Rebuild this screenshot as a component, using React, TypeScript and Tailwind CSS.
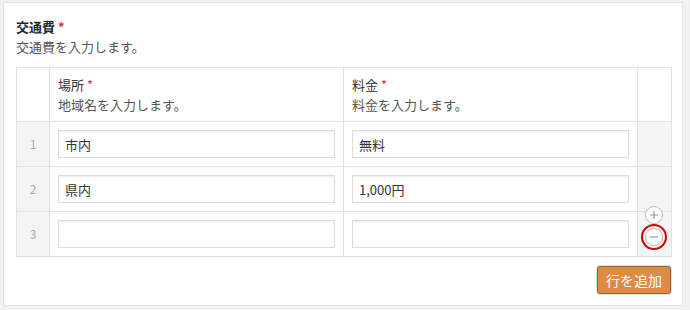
import React from 'react';

const rows = [
  { place: '市内', price: '無料' },
  { place: '県内', price: '1,000円' },
  { place: '', price: '' },
];

const font = { fontFamily: '"Noto Sans CJK JP", "Open Sans", sans-serif' };

function TextInput({ value }: { value: string }) {
  return (
    <input
      className="block h-[28px] w-full border border-[#dddddd] bg-white px-[6px] text-[13px] text-[#333] shadow-[inset_0_1px_2px_rgba(0,0,0,0.07)] outline-none"
      defaultValue={value}
    />
  );
}

export default function App() {
  return (
    <div className="h-[310px] w-[690px] bg-[#f1f1f1] pl-[3px] pt-[2px]" style={font}>
      <div className="h-[304px] w-[680px] border border-[#e5e5e5] bg-white pl-[12px] pr-[11px] pt-[14px]">
        <div className="text-[13px] font-bold leading-[20px] text-[#23282d]">
          交通費 <span className="text-[#dc3232]">*</span>
        </div>
        <div className="text-[13px] leading-[20px] text-[#555]">交通費を入力します。</div>

        <table className="mt-[10px] w-[655px] table-fixed border-collapse border border-[#e1e1e1] text-[13px]">
          <colgroup>
            <col className="w-[33px]" />
            <col className="w-[294px]" />
            <col className="w-[294px]" />
            <col className="w-[34px]" />
          </colgroup>
          <thead>
            <tr>
              <th className="border border-[#e1e1e1]" />
              <th className="border border-[#e1e1e1] px-[8px] pb-[6px] pt-[7px] text-left font-normal leading-[20px] text-[#333]">
                <div>
                  場所 <span className="text-[#dc3232]">*</span>
                </div>
                <div className="text-[#555]">地域名を入力します。</div>
              </th>
              <th className="border border-[#e1e1e1] px-[8px] pb-[6px] pt-[7px] text-left font-normal leading-[20px] text-[#333]">
                <div>
                  料金 <span className="text-[#dc3232]">*</span>
                </div>
                <div className="text-[#555]">料金を入力します。</div>
              </th>
              <th className="border border-[#e1e1e1]" />
            </tr>
          </thead>
          <tbody>
            {rows.map((row, i) => (
              <tr key={i}>
                <td className="border border-[#e1e1e1] bg-[#f4f4f4] text-center text-[12px] text-[#aaa]">
                  {i + 1}
                </td>
                <td className="border border-[#e1e1e1] p-[8px]">
                  <TextInput value={row.place} />
                </td>
                <td className="border border-[#e1e1e1] p-[8px]">
                  <TextInput value={row.price} />
                </td>
                <td className="relative border border-[#e1e1e1] bg-[#f5f5f5]">
                  {i === rows.length - 1 ? (
                    <>
                      <svg className="absolute left-[6px] top-[-7px]" width="20" height="20" viewBox="0 0 20 20">
                        <circle cx="10" cy="10" r="8.5" fill="#fff" stroke="#bbb" strokeWidth="1" />
                        <path d="M10 6v8M6 10h8" stroke="#999" strokeWidth="1.2" />
                      </svg>
                      <svg className="absolute left-[2px] top-[11px]" width="28" height="28" viewBox="0 0 28 28">
                        <circle cx="14" cy="14" r="8.5" fill="#fff" stroke="#bbb" strokeWidth="1" />
                        <path d="M10 14h8" stroke="#999" strokeWidth="1.2" />
                        <circle cx="14" cy="14" r="12" fill="none" stroke="#d40000" strokeWidth="2" />
                      </svg>
                    </>
                  ) : null}
                </td>
              </tr>
            ))}
          </tbody>
        </table>

        <div className="mt-[9px] flex w-[655px] justify-end">
          <button
            type="button"
            className="h-[28px] w-[74px] rounded-[3px] border border-[#9c6230] bg-[#dd8b46] text-[14px] text-white shadow-[0_0_0_1px_#c7e7ea]"
          >
            行を追加
          </button>
        </div>
      </div>
    </div>
  );
}
